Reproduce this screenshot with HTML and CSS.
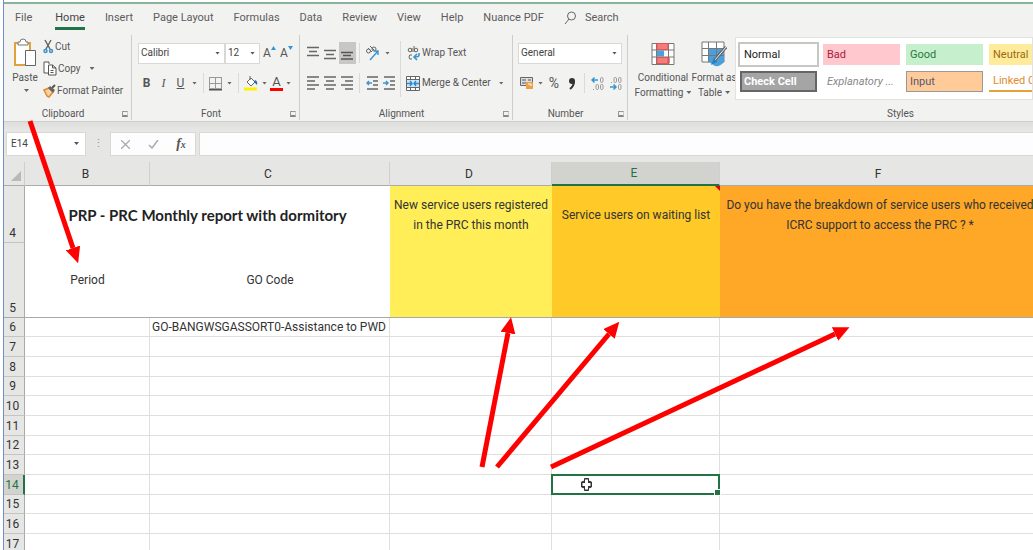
FILE: index.html
```html
<!DOCTYPE html>
<html lang="en">
<head>
<meta charset="utf-8">
<title>PRC Monthly report</title>
<link rel="stylesheet" href="styles.css">
</head>
<body>
<div class="app">
  <nav class="tabs" aria-label="Ribbon tabs">
    <a href="#file">File</a>
    <a href="#home" class="current">Home</a>
    <a href="#insert">Insert</a>
    <a href="#layout">Page Layout</a>
    <a href="#formulas">Formulas</a>
    <a href="#data">Data</a>
    <a href="#review">Review</a>
    <a href="#view">View</a>
    <a href="#help">Help</a>
    <a href="#nuance">Nuance PDF</a>
    <a href="#search" class="search"><svg width="13" height="14" viewBox="0 0 13 14" fill="none" stroke="#666"><circle cx="7.500" cy="5" r="4"/><path d="M5 8 1 13"/></svg>Search</a>
  </nav>

  <div class="ribbon">
    <section class="group clipboard">
      <div class="tools">
        <button class="big paste">
          <svg width="24" height="30" viewBox="0 0 24 30"><path d="M2 5h15v22H2z" fill="#fff" stroke="#e0a23c" stroke-width="2"/><path d="M5 7V4h2q0-3 3-3t3 3h2v3z" fill="#fff" stroke="#777"/><path d="M12.500 12.500h10v15h-10z" fill="#fff" stroke="#666"/></svg>
          <span>Paste</span><i class="caret"></i>
        </button>
        <div class="stack">
          <button><svg width="11" height="15" viewBox="0 0 11 15" fill="none"><path d="m2 1 5 9M8 1l-5 9" stroke="#666" stroke-width="1.500"/><circle cx="2.500" cy="12" r="1.500" stroke="#3a94d0" stroke-width="1.500"/><circle cx="8" cy="12" r="1.500" stroke="#3a94d0" stroke-width="1.500"/></svg>Cut</button>
          <button><svg width="14" height="15" viewBox="0 0 14 15" fill="#fff" stroke="#555"><path d="M5 12H1V1h5v2"/><path d="M5.500 4h4L13 7v7H5.500zM9.500 4v3H13"/><path d="M7.500 9.500h3M7.500 11.500h3"/></svg>Copy<i class="caret"></i></button>
          <button><svg width="13" height="14" viewBox="0 0 13 14"><path d="M1 6l5-2 4 4-4 5-2-1z" fill="#f6d2a4" stroke="#e08a2e" stroke-width="1.500"/><path d="m5 4 2-2 5 4-2 3z" fill="#666"/><path d="m9 4 3-3" stroke="#555" stroke-width="2"/></svg>Format Painter</button>
        </div>
      </div>
      <footer><span>Clipboard</span><button class="launch" aria-label="Clipboard settings"></button></footer>
    </section>

    <section class="group font">
      <div class="tools rows">
        <div class="row">
          <label class="drop face"><select aria-label="Font"><option>Calibri</option></select></label><label class="drop size"><select aria-label="Font size"><option>12</option></select></label>
          <button class="grow" aria-label="Increase font size">A<svg width="5" height="4" viewBox="0 0 5 4"><path d="M0 4 2.500 0 5 4z" fill="#3a94d0"/></svg></button>
          <button class="grow small" aria-label="Decrease font size">A<svg width="5" height="4" viewBox="0 0 5 4"><path d="M0 0h5L2.500 4z" fill="#3a94d0"/></svg></button>
        </div>
        <div class="row">
          <button class="cell"><b>B</b></button>
          <button class="cell serif"><em>I</em></button>
          <button class="cell"><u>U</u></button>
          <i class="caret"></i><i class="sep"></i>
          <button class="cell" aria-label="Borders"><svg width="13" height="15" viewBox="0 0 13 15" fill="none" stroke="#999"><path d="M.5 1v11M12.500 1v11M6.500 1v11M0 1.500h13M0 7.500h13"/><path d="M0 13.500h13" stroke="#555" stroke-width="2"/></svg></button>
          <i class="caret"></i><i class="sep"></i>
          <button class="cell" aria-label="Fill color"><svg width="14" height="15" viewBox="0 0 14 15"><path d="m3 6 4-4 4 4-4 4z" fill="#fff" stroke="#666"/><path d="M6 0v4" stroke="#666"/><path d="M11 4q3 1 2 5-2-2-3-3z" fill="#2a6ea8"/><path d="M0 11.500h13v3H0z" fill="#fff200"/></svg></button>
          <i class="caret"></i>
          <button class="cell color" aria-label="Font color">A</button>
          <i class="caret"></i>
        </div>
      </div>
      <footer><span>Font</span><button class="launch" aria-label="Font settings"></button></footer>
    </section>

    <section class="group align">
      <div class="tools">
        <div class="rows">
          <div class="row">
            <button class="cell" aria-label="Top align"><svg width="13" height="14" viewBox="0 0 13 14" stroke="#666" stroke-width="1.300"><path d="M0 1.500h12M2 5.500h8M0 9.500h12"/></svg></button>
            <button class="cell" aria-label="Middle align"><svg width="13" height="14" viewBox="0 0 13 14" stroke="#666" stroke-width="1.300"><path d="M0 4.500h12M2 8.500h8M0 12.500h12"/></svg></button>
            <button class="cell on" aria-label="Bottom align"><svg width="13" height="14" viewBox="0 0 13 14" stroke="#555" stroke-width="1.300"><path d="M0 6.500h12M2 9.500h8M0 13h12"/></svg></button>
            <i class="sep"></i>
            <button class="cell" aria-label="Orientation"><svg width="15" height="16" viewBox="0 0 15 16" fill="none"><g stroke="#666"><circle cx="3.500" cy="6" r="2"/><path d="m3 3 4 4M5 1l5 5"/><circle cx="9" cy="4" r="2"/></g><path d="m5 15 8-9M9 6h4v4" stroke="#3a94d0" stroke-width="1.400"/></svg></button>
            <i class="caret"></i>
          </div>
          <div class="row">
            <button class="cell" aria-label="Align left"><svg width="13" height="14" viewBox="0 0 13 14" stroke="#666" stroke-width="1.300"><path d="M0 1h12M0 5h8M0 9h12M0 13h8"/></svg></button>
            <button class="cell" aria-label="Center"><svg width="13" height="14" viewBox="0 0 13 14" stroke="#666" stroke-width="1.300"><path d="M0 1h12M2 5h8M0 9h12M2 13h8"/></svg></button>
            <button class="cell" aria-label="Align right"><svg width="13" height="14" viewBox="0 0 13 14" stroke="#666" stroke-width="1.300"><path d="M0 1h12M4 5h8M0 9h12M4 13h8"/></svg></button>
            <i class="sep"></i>
            <button class="cell" aria-label="Decrease indent"><svg width="13" height="14" viewBox="0 0 13 14"><path d="M1 1h11M7 5h5M7 9h5M1 13h11" stroke="#666" stroke-width="1.300"/><path d="M6 7H1M3 5 1 7l2 2" stroke="#3a94d0" stroke-width="1.400" fill="none"/></svg></button>
            <button class="cell" aria-label="Increase indent"><svg width="13" height="14" viewBox="0 0 13 14"><path d="M1 1h11M7 5h5M7 9h5M1 13h11" stroke="#666" stroke-width="1.300"/><path d="M0 7h5M3 5l2 2-2 2" stroke="#3a94d0" stroke-width="1.400" fill="none"/></svg></button>
          </div>
        </div>
        <i class="sep tall"></i>
        <div class="rows">
          <div class="row"><button><svg width="14" height="16" viewBox="0 0 14 16" fill="none" stroke="#666"><circle cx="4" cy="5" r="1.800"/><path d="M6 3v4M8 1v6"/><circle cx="10" cy="5" r="1.800"/><path d="M6 10q-3-1-3 2t3 2"/><path d="M13 8v2q0 2-4 2M11 9l-3 3 3 3" stroke="#3a94d0" stroke-width="1.600"/></svg>Wrap Text</button></div>
          <div class="row"><button><svg width="14" height="15" viewBox="0 0 14 15" fill="none" stroke="#666"><path d="M.5.500h13v14H.5z" fill="#fff"/><path d="M0 3.500h14M0 11.500h14M4.500 0v4M9.500 0v4M4.500 11v4M9.500 11v4"/><path d="M1 4h12v7H1z" fill="#cfe6f6" stroke="none"/><path d="M1 7.500h5M4 5l2 2.500L4 10M13 7.500H8M10 5 8 7.500 10 10" stroke="#2a8bc8" stroke-width="1.400"/></svg>Merge &amp; Center<i class="caret"></i></button></div>
        </div>
      </div>
      <footer><span>Alignment</span><button class="launch" aria-label="Alignment settings"></button></footer>
    </section>

    <section class="group number">
      <div class="tools rows">
        <div class="row"><label class="drop format"><select aria-label="Number format"><option>General</option></select></label></div>
        <div class="row">
          <button class="cell" aria-label="Accounting format"><svg width="14" height="14" viewBox="0 0 14 14"><path d="M.5 1.500h12v8H.5z" fill="#ddd" stroke="#666"/><path d="M2 4h4M2 7h4M8 4h3" stroke="#555"/><path d="M6 6h7v7H6z" fill="#e9a24a"/><path d="M8 8h3v2" stroke="#fff" fill="none"/></svg></button>
          <i class="caret"></i>
          <button class="cell sign">%</button>
          <button class="cell" aria-label="Comma style"><svg width="8" height="13" viewBox="0 0 8 13"><circle cx="4" cy="4" r="3" fill="#333"/><path d="M6 4q0 5-4 8" stroke="#333" stroke-width="2" fill="none"/></svg></button>
          <i class="sep"></i>
          <button class="cell" aria-label="Increase decimal"><svg width="13" height="15" viewBox="0 0 13 15" fill="none" stroke="#999"><rect x="9.500" y="1.500" width="2.500" height="5" rx="1.200"/><rect x="5" y="8.500" width="2.500" height="5" rx="1.200"/><rect x="9.500" y="8.500" width="2.500" height="5" rx="1.200"/><path d="M2.500 13v1"/><path d="M7 4H1M3.500 1.500 1 4l2.500 2.500" stroke="#3a94d0" stroke-width="1.500"/></svg></button>
          <button class="cell" aria-label="Decrease decimal"><svg width="13" height="15" viewBox="0 0 13 15" fill="none" stroke="#999"><rect x="5" y="1.500" width="2.500" height="5" rx="1.200"/><rect x="9.500" y="1.500" width="2.500" height="5" rx="1.200"/><rect x="9.500" y="8.500" width="2.500" height="5" rx="1.200"/><path d="M2.500 6v1"/><path d="M1 11h6M4.500 8.500 7 11l-2.500 2.500" stroke="#3a94d0" stroke-width="1.500"/></svg></button>
        </div>
      </div>
      <footer><span>Number</span><button class="launch" aria-label="Number settings"></button></footer>
    </section>

    <section class="group styles">
      <div class="tools">
        <button class="big wide">
          <svg width="24" height="23" viewBox="0 0 24 23"><path d="M1 1h22v21H1z" fill="#fff"/><path d="M6 1h11v6H6zM6 15h13v6H6z" fill="#f47c7c"/><path d="M6 8h7v6H6z" fill="#4a9fdc"/><path d="M1 1h22v21H1zM1 7.500h22M1 14.500h22M5.500 1v21M17.500 1v21" fill="none" stroke="#777"/><path d="M6 1h11v6H6zM6 15h11v6H6z" fill="none" stroke="#e25555"/></svg>
          <span>Conditional</span><span>Formatting<i class="caret"></i></span>
        </button>
        <button class="big table-btn">
          <svg width="26" height="26" viewBox="0 0 26 26"><path d="M1 1h22v20H1z" fill="#fff" stroke="#777"/><path d="M8 8h15v13q-4 5-9 4l-6-4z" fill="#4a9fdc"/><path d="M1 7.500h22M1 14.500h22M7.500 1v20M15.500 1v20" stroke="#777" fill="none"/><path d="M25 6 13 20" stroke="#666" stroke-width="3"/><path d="M25 6 14 19" stroke="#eee"/><path d="m13 17-3 7 6-3z" fill="#2a7fc0"/></svg>
          <span>Format as</span><span>Table<i class="caret"></i></span>
        </button>
        <div class="gallery">
          <button class="normal">Normal</button><button class="bad">Bad</button><button class="good">Good</button><button class="neutral">Neutral</button>
          <button class="check">Check Cell</button><button class="explain">Explanatory ...</button><button class="input">Input</button><button class="linked">Linked Cell</button>
        </div>
      </div>
      <footer><span>Styles</span></footer>
    </section>
  </div>

  <div class="formula-bar">
    <label class="name-box drop"><input aria-label="Name box" value="E14"></label>
    <span class="dots">⋮</span>
    <div class="actions">
      <button aria-label="Cancel"><svg width="9" height="9" viewBox="0 0 9 9" stroke="#aaa" stroke-width="1.300"><path d="m0 0 9 9M9 0 0 9"/></svg></button>
      <button aria-label="Enter"><svg width="11" height="9" viewBox="0 0 11 9" fill="none" stroke="#aaa" stroke-width="1.500"><path d="m1 5 3 3 6-8"/></svg></button>
      <button class="fx">f<small>x</small></button>
    </div>
    <input class="formula" aria-label="Formula">
  </div>

  <div class="sheet">
    <table>
      <colgroup><col class="c-num"><col class="c-b"><col class="c-c"><col class="c-d"><col class="c-e"><col class="c-f"><col></colgroup>
      <thead><tr><th class="corner"><svg width="10" height="10" viewBox="0 0 10 10"><path d="M10 0v10H0z" fill="#b9b9b9"/></svg></th><th>B</th><th>C</th><th>D</th><th class="active">E</th><th>F</th><th></th></tr></thead>
      <tbody>
        <tr class="head"><th>4</th><td colspan="2" class="title">PRP - PRC Monthly report with dormitory</td><td class="yellow">New service users registered in the PRC this month</td><td class="gold note">Service users on waiting list</td><td class="orange">Do you have the breakdown of service users who received ICRC support to access the PRC ? *</td><td class="orange"></td></tr>
        <tr class="head sub"><th>5</th><td>Period</td><td>GO Code</td><td class="yellow"></td><td class="gold"></td><td class="orange"></td><td class="orange"></td></tr>
        <tr class="short"><th>6</th><td></td><td>GO-BANGWSGASSORT0-Assistance to PWD</td><td></td><td></td><td></td><td></td></tr>
        <tr><th>7</th><td></td><td></td><td></td><td></td><td></td><td></td></tr>
        <tr><th>8</th><td></td><td></td><td></td><td></td><td></td><td></td></tr>
        <tr class="short"><th>9</th><td></td><td></td><td></td><td></td><td></td><td></td></tr>
        <tr><th>10</th><td></td><td></td><td></td><td></td><td></td><td></td></tr>
        <tr><th>11</th><td></td><td></td><td></td><td></td><td></td><td></td></tr>
        <tr class="short"><th>12</th><td></td><td></td><td></td><td></td><td></td><td></td></tr>
        <tr><th>13</th><td></td><td></td><td></td><td></td><td></td><td></td></tr>
        <tr><th class="active">14</th><td></td><td></td><td></td><td class="selected"><svg width="13" height="15" viewBox="0 0 13 15"><path d="M4.500 1.500h4V4l3 1v5l-3 1v2.500h-4V11l-3-1V5l3-1z" fill="#333" stroke="#333"/><path d="M5 2.500h3V6h2.500v3H8v3.500H5V9H2.500V6H5z" fill="#fff"/></svg></td><td></td><td></td></tr>
        <tr class="short"><th>15</th><td></td><td></td><td></td><td></td><td></td><td></td></tr>
        <tr><th>16</th><td></td><td></td><td></td><td></td><td></td><td></td></tr>
        <tr><th>17</th><td></td><td></td><td></td><td></td><td></td><td></td></tr>
      </tbody>
    </table>
  </div>
</div>

<svg class="arrows" width="1033" height="550" viewBox="0 0 1033 550" aria-hidden="true">
  <defs><marker id="tip" markerUnits="userSpaceOnUse" markerWidth="16" markerHeight="15" refX="0" refY="7.500" orient="auto"><path d="M0 0 16 7.500 0 15z" fill="#f00"/></marker></defs>
  <g stroke="#f00" stroke-width="5">
    <path d="M30 121 73 248" marker-end="url(#tip)"/>
    <path d="M482 467 508 333" marker-end="url(#tip)"/>
    <path d="M497 467 609 334" marker-end="url(#tip)"/>
    <path d="M551 467 835 334" marker-end="url(#tip)"/>
  </g>
</svg>
</body>
</html>
```
FILE: styles.css
```css
* { box-sizing: border-box; }

body {
  margin: 0;
  height: 100vh;
  overflow: hidden;
  background: #fff;
  color: #555;
  font: 11px/14px Roboto, "Open Sans", sans-serif;
}

button, input, select {
  margin: 0;
  padding: 0;
  border: 0;
  border-radius: 0;
  background: none;
  color: inherit;
  font: inherit;
}

svg { display: block; flex: none; }

.app {
  display: flex;
  flex-direction: column;
  height: 100%;
  margin-left: 3px;
  border-left: 1px solid #6f8fc8;
  padding-top: 2px;
}

.tabs {
  display: flex;
  gap: 20px;
  padding: 7px 11px 0;
  height: 31px;
  border-top: 2px solid #86b59c;
  background: #f2f2f1;
  white-space: nowrap;
}
.tabs a { height: 19px; color: #5c5c5c; text-decoration: none; }
.tabs .current { border-bottom: 3px solid #217346; color: #444; margin-left: 3px; }
.tabs .search { display: flex; gap: 8px; }

.ribbon {
  display: flex;
  height: 89px;
  border-bottom: 1px solid #cfcfcd;
  background: #f2f2f1;
  white-space: nowrap;
}

.group {
  display: flex;
  flex: none;
  flex-direction: column;
  justify-content: space-between;
  margin: 2px 0 1px;
  border-right: 1px solid #cdcdcb;
}
.group footer { display: flex; height: 12px; font-size: 10px; line-height: 12px; padding-right: 3px; }
.group footer span { flex: 1; text-align: center; }
.clipboard { width: 128px; }
.font { width: 168px; }
.align { width: 213px; }
.number { width: 115px; }
.styles { flex: 1 0 400px; min-width: 0; border: 0; }
.styles footer { padding-right: 0; }
.styles footer span { flex: none; width: 545px; }

.launch {
  width: 6px;
  height: 6px;
  margin-top: 3px;
  border: 1px solid #999;
  border-right-color: #ccc;
  border-bottom: 2px solid #888;
}

.tools { display: flex; }
.rows { display: flex; flex-direction: column; gap: 6px; }
.tools.rows, .tools .rows { padding-top: 6px; }
.row { display: flex; align-items: center; height: 24px; }
.tools button { display: flex; align-items: center; }
.cell { justify-content: center; width: 17px; height: 22px; }
.cell.on { background: #c8c7c3; }

.caret {
  flex: none;
  width: 5px;
  height: 3px;
  margin: 0 4px;
  background: #666;
  clip-path: polygon(0 0, 100% 0, 50% 100%);
}
.sep { flex: none; width: 1px; height: 20px; margin: 0 3px; background: #dadad8; }
.sep.tall { height: 56px; margin: 6px 4px 0 8px; }

.drop { position: relative; display: flex; height: 21px; border: 1px solid #d8d8d6; background: #fff; }
.drop select, .drop input { width: 100%; padding-left: 2px; appearance: none; color: #444; font-size: 10px; }
.drop::after {
  content: "";
  position: absolute;
  top: 8px;
  right: 4px;
  width: 5px;
  height: 3px;
  background: #555;
  clip-path: polygon(0 0, 100% 0, 50% 100%);
}

.tools .big { flex-direction: column; font-size: 10px; line-height: 15px; }
.big .caret { display: inline-block; margin: 4px 0 2px 3px; }
.paste { width: 30px; margin-left: 6px; padding-top: 3px; }
.paste span { margin-top: 2px; }
.stack { display: flex; flex-direction: column; gap: 7px; padding: 4px 0 0 3px; }
.stack button { gap: 1px; height: 15px; font-size: 10px; }
.stack .caret { margin-left: 8px; }

.font .rows { padding-left: 6px; }
.face { width: 87px; }
.size { width: 35px; }
.grow { width: 17px; margin-left: 3px; font-size: 12px; }
.grow svg { align-self: flex-start; }
.grow.small { margin-left: 0; }
.serif { font-family: "Liberation Serif", serif; font-size: 13px; }
.font .caret { margin: 0 3px; }
.font .sep { margin: 0 3px; }
.font .cell { font-size: 12px; }
.tools .color { width: 13px; height: 15px; border-bottom: 3px solid #f00; font-size: 13px; }

.align .tools { padding-left: 5px; }
.align .row button:not(.cell) { gap: 2px; }
.align .row { font-size: 10px; }
.align .sep { margin: 0 4px 0 3px; }
.align .sep.tall { margin: 6px 5px 0 2px; }
.align .row button .caret { margin-left: 6px; }

.number .tools { padding-left: 5px; }
.format { width: 104px; }
.number .cell { width: 18px; }
.number .sign { font-size: 14px; }
.number .caret { margin: 0 2px; }

.styles .big { gap: 0; padding-top: 6px; }
.styles .big svg { height: 26px; margin-bottom: 3px; }
.wide { width: 60px; margin-left: 5px; }
.table-btn { width: 42px; }

.gallery {
  display: grid;
  grid-template-columns: repeat(4, 77px);
  grid-auto-rows: 21px;
  gap: 6px;
  flex: 1;
  min-width: 0;
  overflow: hidden;
  margin-top: 2px;
  padding: 6px 4px;
  border: 1px solid #e2e2e0;
  background: #fff;
}
.gallery button { padding-left: 4px; font-size: 11px; }
.gallery .normal { outline: 2px solid #c6c6c4; color: #222; }
.bad { background: #ffc7ce; color: #a8203a; }
.good { background: #c6efce; color: #287a3a; }
.neutral { background: #ffeb9c; color: #9c6a10; }
.gallery .check { border: 2px solid #666; padding-left: 2px; background: #a5a5a5; color: #fff; font-weight: 700; }
.explain { color: #888; font-style: italic; }
.gallery .input { border: 1px solid #999; padding-left: 3px; background: #ffcc99; color: #5a5578; }
.gallery .linked { border-bottom: 2px solid #e6a23c; color: #e08a2e; }

.formula-bar {
  display: flex;
  align-items: flex-start;
  height: 40px;
  padding: 10px 0 0 2px;
  background: linear-gradient(#dededc, #e6e6e5 8px);
}
.formula-bar .drop { width: 80px; height: 24px; }
.formula-bar .drop input { padding-left: 4px; }
.formula-bar .drop::after { right: 6px; top: 9px; }
.dots { width: 24px; color: #999; line-height: 24px; text-align: center; }
.actions, .formula { height: 24px; border: 1px solid #d8d8d6; background: #fdfdfd; }
.actions { display: flex; width: 86px; margin-right: 3px; }
.actions button { display: flex; flex: 1; align-items: center; justify-content: center; }
.formula { flex: 1; min-width: 0; padding: 0 4px; border-right: 0; }
.actions .fx { color: #555; font: italic 700 14px "Liberation Serif", serif; }
.fx small { font-size: 10px; }

.sheet { flex: 1; min-height: 0; overflow: hidden; }
table {
  width: 100%;
  min-width: 1036px;
  table-layout: fixed;
  border-collapse: separate;
  border-spacing: 0;
  color: #333;
  font: 12px/18px Roboto, sans-serif;
}
.c-num { width: 21px; }
.c-b { width: 125px; }
.c-c { width: 240px; }
.c-d { width: 162px; }
.c-e { width: 168px; }
.c-f { width: 320px; }

th, td { height: 20px; padding: 0 2px; border: 0 solid #dfdfdd; border-width: 0 1px 1px 0; white-space: nowrap; }
th { padding: 0 3px 0 0; border-color: #c4c4c2; background: #e6e6e5; font-weight: 400; vertical-align: bottom; }
.short th, .short td { height: 19px; }
tbody th { border-right-color: #aaa; }
thead th { height: 24px; border-right-color: #cfcfcd; border-bottom-color: #ababa9; vertical-align: middle; }
thead .corner { padding: 5px 3px 0 7px; }
th.active { background: #d2d3cf; color: #217346; }
thead .active { border-bottom: 2px solid #217346; }
tbody .active { border-right: 2px solid #217346; }

.head td { height: 57px; border: 0; text-align: center; white-space: normal; line-height: 20px; }
.head th { height: 57px; }
.head .title { color: #222; font: 700 15px/20px Lato, sans-serif; }
.sub th { height: 75px; }
.sub th, .head.sub td { height: 75px; border-bottom: 1px solid #a8a8a6; }
.yellow { background: #ffee58; }
.gold { background: #ffca28; }
.orange { background: #ffa726; }

.note { position: relative; }
.note::after {
  content: "";
  position: absolute;
  top: 0;
  right: 0;
  width: 5px;
  height: 5px;
  background: #e00000;
  clip-path: polygon(0 0, 100% 0, 100% 100%);
}

.selected { position: relative; padding-left: 28px; }
.selected::before {
  content: "";
  position: absolute;
  inset: -1px;
  border: 2px solid #217346;
}
.selected::after {
  content: "";
  position: absolute;
  right: -2px;
  bottom: -2px;
  width: 5px;
  height: 5px;
  border: 1px solid #fff;
  background: #217346;
}

.arrows { position: absolute; top: 0; left: 0; pointer-events: none; }
```
